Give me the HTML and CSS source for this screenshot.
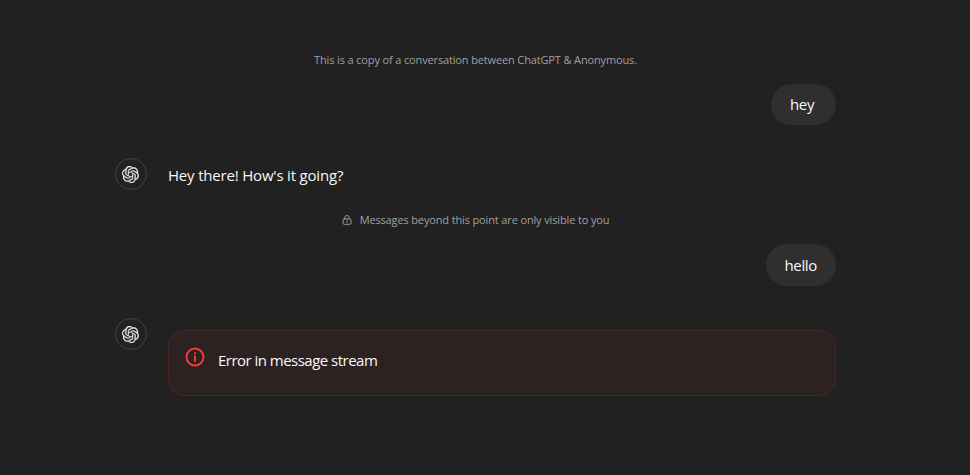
FILE: index.html
```html
<!DOCTYPE html>
<html lang="en">
<head>
    <meta charset="UTF-8">
    <meta name="viewport" content="width=device-width, initial-scale=1.0">
    <title>Shared conversation</title>
    <link rel="stylesheet" href="styles.css">
</head>
<body>
    <svg class="symbols" width="0" height="0">
        <symbol id="logo" viewBox="0 0 24 24">
            <path d="M22.2819 9.8211a5.9847 5.9847 0 0 0-.5157-4.9108 6.0462 6.0462 0 0 0-6.5098-2.9A6.0651 6.0651 0 0 0 4.9807 4.1818a5.9847 5.9847 0 0 0-3.9977 2.9 6.0462 6.0462 0 0 0 .7427 7.0966 5.98 5.98 0 0 0 .511 4.9107 6.051 6.051 0 0 0 6.5146 2.9001A5.9847 5.9847 0 0 0 13.2599 24a6.0557 6.0557 0 0 0 5.7718-4.2058 5.9894 5.9894 0 0 0 3.9977-2.9001 6.0557 6.0557 0 0 0-.7475-7.073zm-9.022 12.6081a4.4755 4.4755 0 0 1-2.8764-1.0408l.1419-.0804 4.7783-2.7582a.7948.7948 0 0 0 .3927-.6813v-6.7369l2.02 1.1686a.071.071 0 0 1 .038.052v5.5826a4.504 4.504 0 0 1-4.4945 4.4944zm-9.6607-4.1254a4.4708 4.4708 0 0 1-.5346-3.0137l.142.0852 4.783 2.7582a.7712.7712 0 0 0 .7806 0l5.8428-3.3685v2.3324a.0804.0804 0 0 1-.0332.0615L9.74 19.9502a4.4992 4.4992 0 0 1-6.1408-1.6464zM2.3408 7.8956a4.485 4.485 0 0 1 2.3655-1.9728V11.6a.7664.7664 0 0 0 .3879.6765l5.8144 3.3543-2.0201 1.1685a.0757.0757 0 0 1-.071 0l-4.8303-2.7865A4.504 4.504 0 0 1 2.3408 7.872zm16.5963 3.8558L13.1038 8.364 15.1192 7.2a.0757.0757 0 0 1 .071 0l4.8303 2.7913a4.4944 4.4944 0 0 1-.6765 8.1042v-5.6772a.79.79 0 0 0-.407-.667zm2.0107-3.0231l-.142-.0852-4.7735-2.7818a.7759.7759 0 0 0-.7854 0L9.409 9.2297V6.8974a.0662.0662 0 0 1 .0284-.0615l4.8303-2.7866a4.4992 4.4992 0 0 1 6.6802 4.66zM8.3065 12.863l-2.02-1.1638a.0804.0804 0 0 1-.038-.0567V6.0742a4.4992 4.4992 0 0 1 7.3757-3.4537l-.142.0805L8.704 5.459a.7948.7948 0 0 0-.3927.6813zm1.0976-2.3654l2.602-1.4998 2.6069 1.4998v2.9994l-2.5974 1.4997-2.6067-1.4997Z"/>
        </symbol>
    </svg>

    <main class="thread">
        <p class="notice"><span>This is a copy of a conversation between ChatGPT &amp; Anonymous.</span></p>

        <div class="user-row first">
            <div class="bubble">hey</div>
        </div>

        <div class="reply">
            <div class="avatar"><svg><use href="#logo"/></svg></div>
            <p class="reply-text">Hey there! How's it going?</p>
        </div>

        <p class="notice private">
            <svg class="lock" viewBox="0 0 10 10">
                <path d="M2.8 4V2.7a2.2 2.2 0 0 1 4.4 0V4"/>
                <rect x="1" y="3.9" width="8" height="5.4" rx="1.2"/>
                <path d="M5 5.7v1.8"/>
            </svg>
            <span>Messages beyond this point are only visible to you</span>
        </p>

        <div class="user-row second">
            <div class="bubble">hello</div>
        </div>

        <div class="reply">
            <div class="avatar"><svg><use href="#logo"/></svg></div>
            <div class="error">
                <svg class="error-icon" viewBox="0 0 20 20">
                    <circle cx="10" cy="10" r="8.5"/>
                    <path d="M10 9.2v5"/>
                    <circle class="dot" cx="10" cy="6.3" r="1.1"/>
                </svg>
                <p class="error-text">Error in message stream</p>
            </div>
        </div>
    </main>
</body>
</html>
```
FILE: styles.css
```css
* {
    box-sizing: border-box;
}

body {
    margin: 0;
    height: 475px;
    overflow: hidden;
    background-color: #212121;
    color: #f8f8f8;
    font-family: "Open Sans", "Noto Sans", sans-serif;
    font-size: 15px;
    line-height: 24px;
}

p {
    margin: 0;
}

.symbols {
    display: block;
}

.thread {
    width: 721px;
    margin-left: 115px;
    padding-top: 50px;
}

.notice {
    display: flex;
    justify-content: center;
    align-items: center;
    gap: 8px;
    height: 20px;
    color: #a0a0a0;
    font-size: 11px;
    line-height: 20px;
    letter-spacing: -0.14px;
    white-space: nowrap;
}

.private {
    margin-top: 20px;
}

.lock {
    width: 10px;
    height: 10px;
    fill: none;
    stroke: #9b9b9b;
    stroke-width: 1;
    stroke-linecap: round;
}

.user-row {
    display: flex;
    justify-content: flex-end;
}

.first {
    margin: 14px 0 33px;
}

.second {
    margin: 14px 0 32px;
}

.bubble {
    min-width: 65px;
    height: 41px;
    padding: 8px 19px;
    border-radius: 21px;
    background-color: #2f2f2f;
    letter-spacing: -0.35px;
}

.second .bubble {
    height: 42px;
    padding-top: 9px;
}

.reply {
    display: flex;
    gap: 21px;
}

.avatar {
    display: flex;
    justify-content: center;
    align-items: center;
    flex: none;
    width: 32px;
    height: 32px;
    padding-right: 1px;
    border: 1px solid #424242;
    border-radius: 50%;
}

.avatar svg {
    width: 17px;
    height: 17px;
    fill: #ececec;
    stroke: #ececec;
    stroke-width: 0.3;
}

.reply-text {
    padding-top: 5px;
    letter-spacing: -0.19px;
}

.error {
    display: flex;
    align-items: flex-start;
    gap: 13px;
    flex: 1;
    height: 66px;
    margin-top: 12px;
    padding: 16px;
    border: 1px solid #4d2424;
    border-radius: 16px;
    background-color: #2d2222;
}

.error-icon {
    flex: none;
    width: 20px;
    height: 20px;
    fill: none;
    stroke: #f93a37;
    stroke-width: 1.9;
    stroke-linecap: round;
}

.dot {
    fill: #f93a37;
    stroke: none;
}

.error-text {
    padding-top: 1px;
    letter-spacing: -0.52px;
}
```
